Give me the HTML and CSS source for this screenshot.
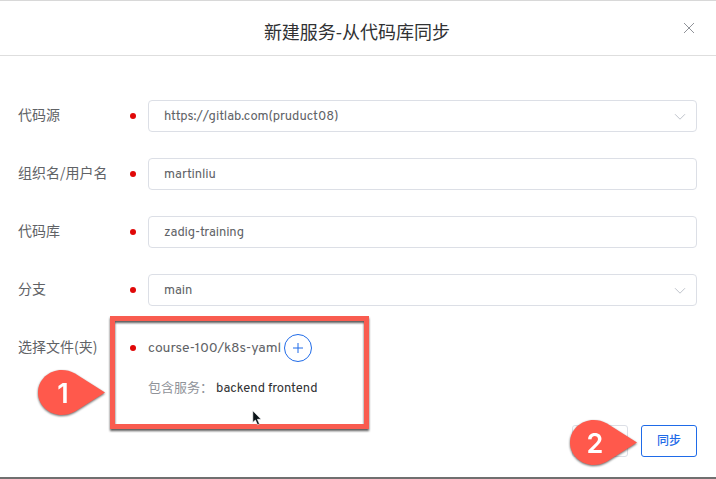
FILE: index.html
```html
<!DOCTYPE html>
<html lang="zh-CN">
<head>
<meta charset="utf-8">
<title>新建服务-从代码库同步</title>
<link rel="stylesheet" href="styles.css">
</head>
<body>
<section class="dialog">
  <header class="dialog-header">
    <h1>新建服务-从代码库同步</h1>
    <svg class="close" width="12" height="12" viewBox="0 0 12 12"><path d="M1 1l10 10M11 1L1 11"/></svg>
  </header>
  <main class="form">
    <div class="row">
      <label>代码源</label><i class="dot"></i>
      <div class="field"><span class="url">https://gitlab.com(pruduct08)</span><svg class="chevron" width="12" height="8" viewBox="0 0 12 8"><path d="M1 1.2l5 5 5-5"/></svg></div>
    </div>
    <div class="row">
      <label>组织名/用户名</label><i class="dot"></i>
      <div class="field"><span>martinliu</span></div>
    </div>
    <div class="row">
      <label>代码库</label><i class="dot"></i>
      <div class="field"><span>zadig-training</span></div>
    </div>
    <div class="row">
      <label>分支</label><i class="dot"></i>
      <div class="field"><span>main</span><svg class="chevron" width="12" height="8" viewBox="0 0 12 8"><path d="M1 1.2l5 5 5-5"/></svg></div>
    </div>
    <div class="row files">
      <label>选择文件(夹)</label><i class="dot"></i>
      <span class="path">course-100/k8s-yaml</span>
      <button class="add" aria-label="添加"><svg width="10" height="10" viewBox="0 0 10 10"><path d="M5 0v10M0 5h10"/></svg></button>
    </div>
    <div class="services"><span class="caption">包含服务：</span><span class="names">backend frontend</span></div>
  </main>
  <footer class="actions">
    <button class="btn" aria-label="取消"></button>
    <button class="btn primary">同步</button>
  </footer>
</section>
<div class="highlight"></div>
<div class="marker first">
  <svg width="70" height="50" viewBox="0 0 70 50"><path d="M68 23.5L38 42.5C21 52 1 41 1 23.5S21-5 38 4.5Z"/></svg>
  <span>1</span>
</div>
<div class="marker second">
  <svg width="70" height="50" viewBox="0 0 70 50"><path d="M68 23.5L38 42.5C21 52 1 41 1 23.5S21-5 38 4.5Z"/></svg>
  <span>2</span>
</div>
<svg class="cursor" width="10" height="16" viewBox="0 0 10 16"><path d="M.8.8v11.7l2.6-2.5 2.1 4.8 2-.9-2.1-4.6h3.7z"/></svg>
</body>
</html>
```
FILE: styles.css
```css
* { box-sizing: border-box; }
body {
  position: relative;
  margin: 0;
  width: 716px;
  height: 479px;
  overflow: hidden;
  background: #fff;
  color: #606266;
  font: 14px/20px Overpass, Roboto, "Noto Sans CJK SC", sans-serif;
}
.dialog {
  height: 479px;
  display: flex;
  flex-direction: column;
  border-top: 1px solid #d8d8d8;
  border-bottom: 2px solid #707070;
}
.dialog-header {
  height: 55px;
  flex: none;
  display: grid;
  grid-template-columns: 1fr auto 1fr;
  align-items: center;
  padding: 6px 21px 0 19px;
  border-bottom: 1px solid #dedede;
}
h1 {
  grid-column: 2;
  margin: 0;
  color: #303133;
  font: 400 18px/26px "Noto Sans CJK SC", sans-serif;
}
.close { justify-self: end; margin-bottom: 6px; fill: none; stroke: #909399; }
.form { padding: 44px 19px 0 18px; }
.row { height: 32px; display: flex; align-items: center; margin-bottom: 26px; }
label {
  width: 111.5px;
  padding-bottom: 5px;
  font-family: "Noto Sans CJK SC", sans-serif;
  white-space: nowrap;
}
.dot { width: 6px; height: 6px; margin: 0 12.5px 1px 0; border-radius: 50%; background: #e00808; }
.field {
  flex: 1;
  height: 32px;
  display: flex;
  align-items: center;
  justify-content: space-between;
  padding: 0 10px 0 15px;
  border: 1px solid #dcdfe6;
  border-radius: 4px;
  font-size: 13px;
}
.field span { padding-top: 2px; letter-spacing: -.1px; }
.field .url { letter-spacing: 0; }
.chevron { margin-top: 2px; fill: none; stroke: #c0c4cc; }
.files { margin-bottom: 0; }
.path { width: 136px; padding-top: 2px; letter-spacing: -.15px; white-space: nowrap; }
.add {
  width: 28px;
  height: 28px;
  padding: 0;
  display: grid;
  place-items: center;
  border: 1px solid #1f6be8;
  border-radius: 50%;
  background: #fff;
}
.add svg { fill: none; stroke: #1f6be8; }
.services { display: flex; align-items: center; height: 20px; margin: 14px 0 0 130px; font-size: 13px; white-space: nowrap; }
.caption { width: 68px; padding-bottom: 2px; color: #909399; font-family: "Noto Sans CJK SC", sans-serif; }
.names { padding-top: 2px; letter-spacing: -.08px; color: #303133; }
.actions { display: flex; justify-content: flex-end; gap: 13px; margin: 27px 19px 0 0; }
.btn {
  width: 56px;
  height: 32px;
  padding: 0 0 2px;
  border: 1px solid #dcdfe6;
  border-radius: 3px;
  background: #fff;
  font: 500 12px/18px "Noto Sans CJK SC", sans-serif;
}
.primary { border-color: #1f6be8; color: #1f6be8; }
.highlight {
  position: absolute;
  left: 110px;
  top: 316px;
  width: 259px;
  height: 113px;
  border: 5px solid #f95c50;
  filter: drop-shadow(0 2px 1px rgba(0, 0, 0, .65));
}
.marker { position: absolute; width: 70px; height: 50px; filter: drop-shadow(0 1px 1px rgba(0, 0, 0, .6)); }
.marker svg { display: block; fill: #ff594c; }
.marker span {
  position: absolute;
  left: 12px;
  top: 8px;
  width: 28px;
  text-align: center;
  color: #fff;
  font: 600 27px/34px Inter, sans-serif;
}
.first { left: 37px; top: 369px; }
.second { left: 569px; top: 419px; }
.cursor { position: absolute; left: 252px; top: 410px; fill: #0c1418; stroke: #fff; stroke-width: .6; }
```
